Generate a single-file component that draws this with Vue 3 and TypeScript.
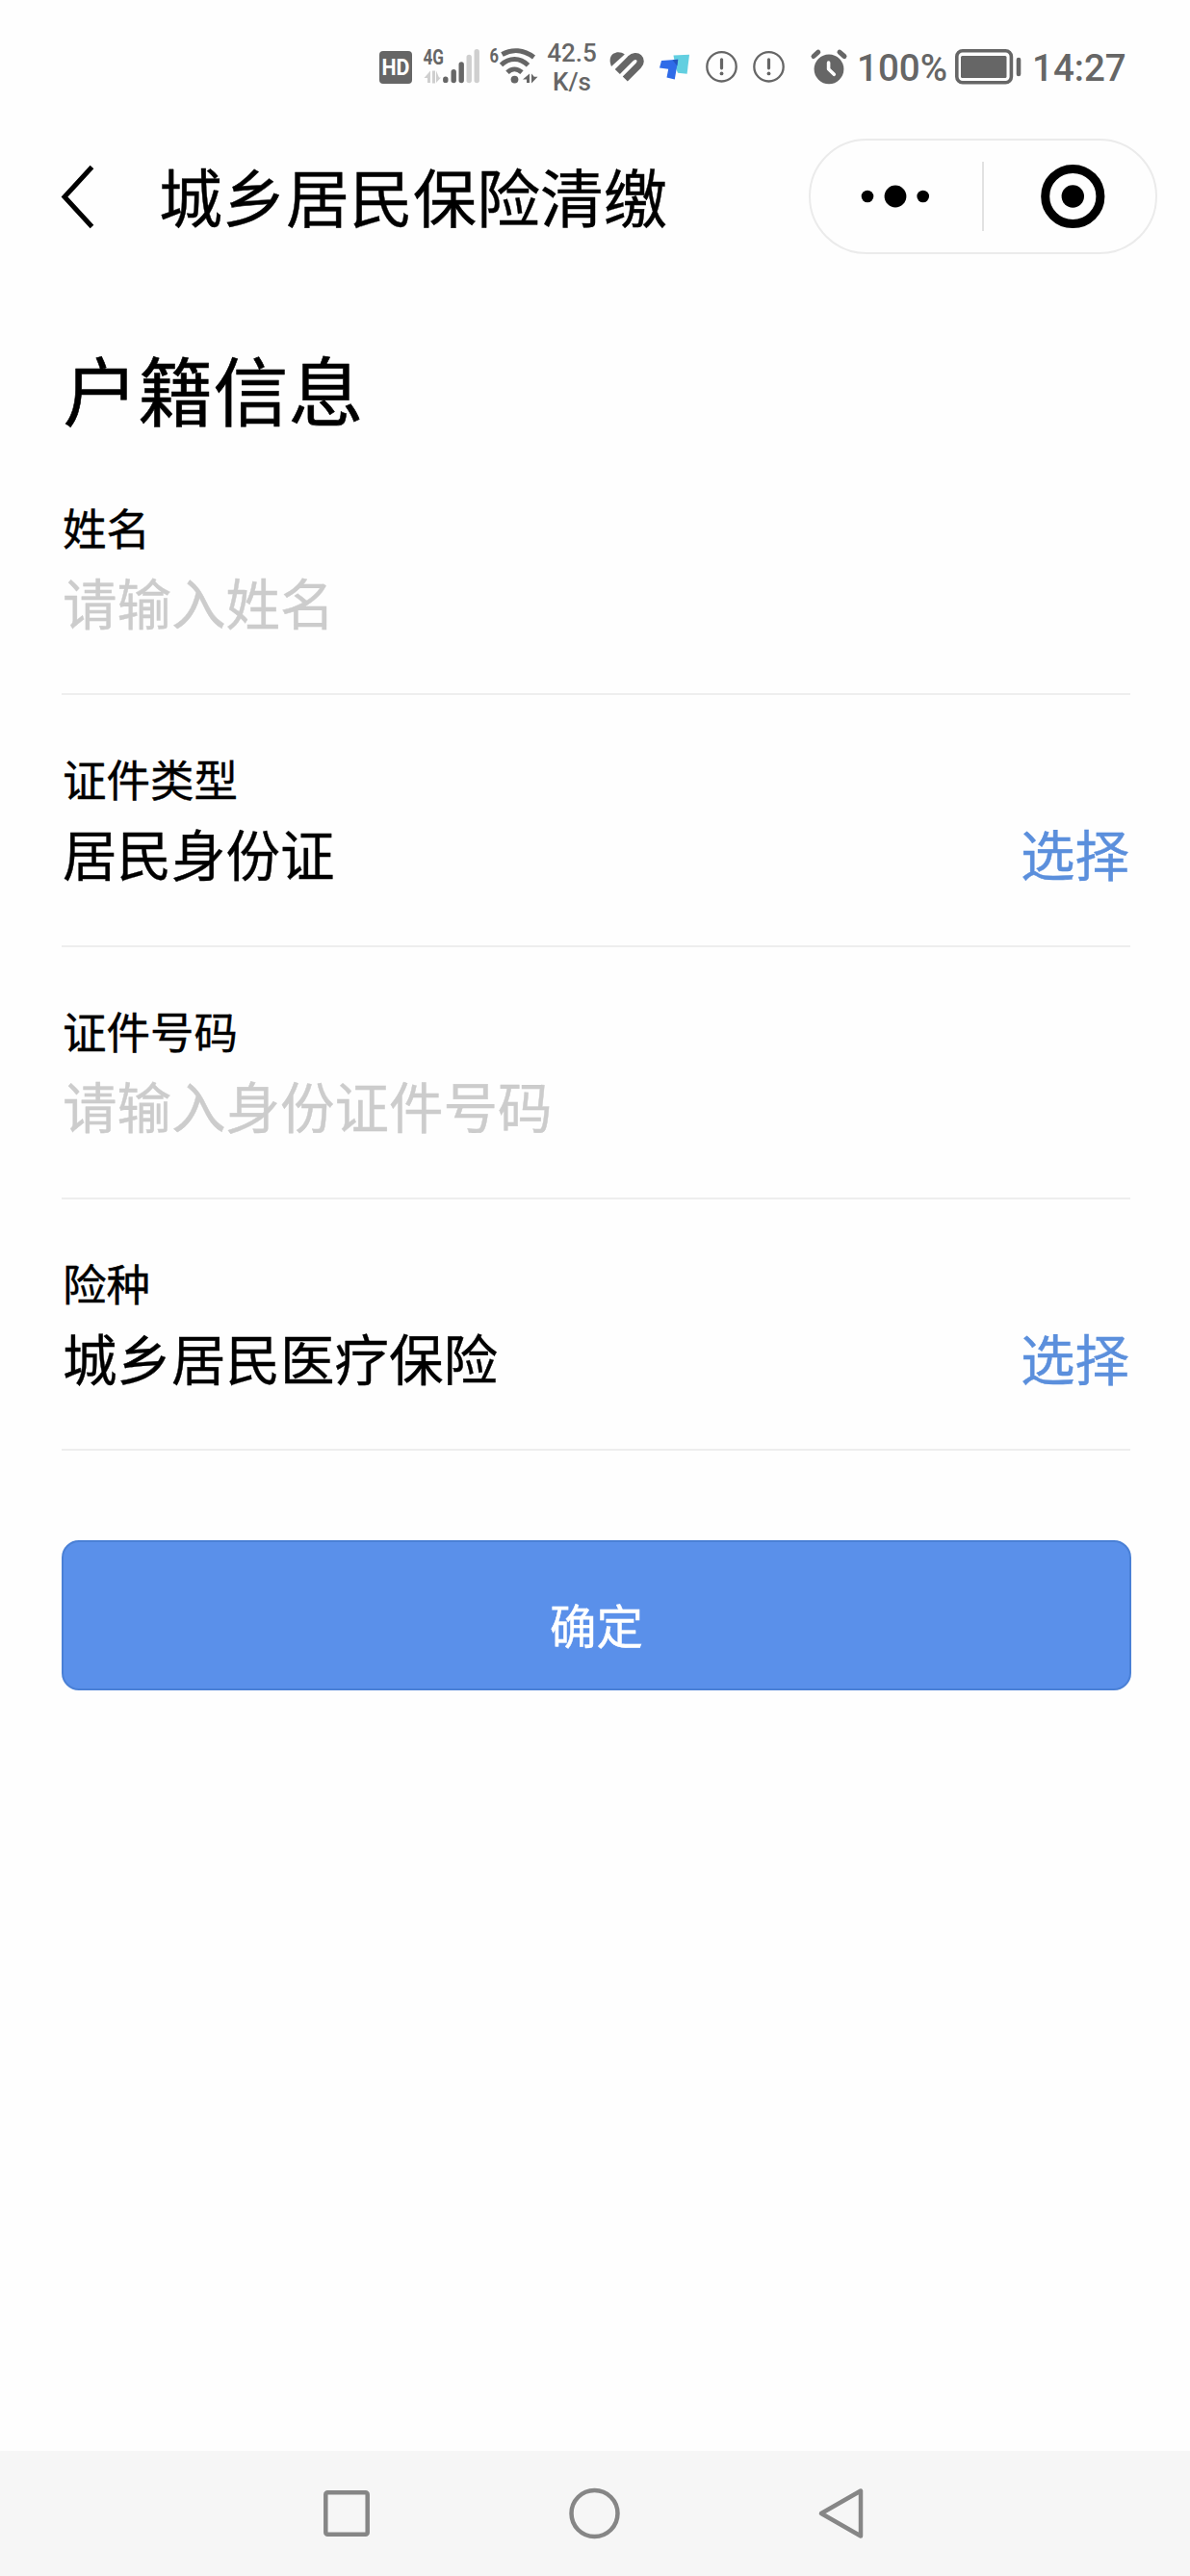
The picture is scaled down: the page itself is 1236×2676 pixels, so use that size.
<script setup lang="ts">
interface Field {
  label: string
  value?: string
  placeholder?: string
}

const fields: Field[] = [
  { label: '姓名', placeholder: '请输入姓名' },
  { label: '证件类型', value: '居民身份证' },
  { label: '证件号码', placeholder: '请输入身份证件号码' },
  { label: '险种', value: '城乡居民医疗保险' },
]
</script>

<template>
  <div class="screen">
    <div class="status">
      <svg class="ic" width="46" height="60" viewBox="390 40 46 60">
        <rect x="394" y="53" width="34" height="34" rx="4" fill="#666" />
        <text x="396.5" y="78" class="b" font-size="23" fill="#fff" textLength="29" lengthAdjust="spacingAndGlyphs">HD</text>
      </svg>
      <svg class="ic" width="68" height="60" viewBox="436 40 68 60">
        <text x="439.5" y="66.5" class="b" font-size="22" fill="#666" textLength="21.5" lengthAdjust="spacingAndGlyphs">4G</text>
        <g stroke-width="5.4" stroke-linecap="round">
          <path stroke="#666" d="M462.8 82.2v1.2M471.2 74.7v8.8M479.2 67v16.5" />
          <path stroke="#cfcfcf" d="M487.2 59.5v24M495.2 53.7v29.8" />
        </g>
        <path fill="#cfcfcf" d="M440.5 81l6.500-7.500v12.500h-3v-5zM449 73.500h3V86.500h-3zM453 73.500v12.500l5-5.500h-2z" />
      </svg>
      <svg class="ic" width="61" height="60" viewBox="504 40 61 60">
        <text x="508.500" y="65" class="b" font-size="21" fill="#666" textLength="9.500" lengthAdjust="spacingAndGlyphs">6</text>
        <g fill="none" stroke="#666" stroke-width="5">
          <path d="M521.500 56.500C532 50.500 544 51.500 554.500 59.500" />
          <path d="M520.500 67.500C529 59.500 540 59.500 548.500 67.800" />
          <path d="M527 75.200C531.500 70.800 537 70.800 542 75.200" />
        </g>
        <circle cx="534.500" cy="82.600" r="3.900" fill="#666" />
        <path fill="#666" d="M543 82.500l7-6V86h-3v-3.500zM552 76.500l2.800 3.200h3.700L552 86.500z" />
      </svg>
      <div class="speed"><span>42.5</span><span>K/s</span></div>
      <svg class="ic" width="52" height="60" viewBox="626 40 52 60">
        <path fill="#666" d="M635 69C632.500 63 633.500 58.500 637 55.800C641 53.200 645.500 54 648.800 56.500Z" />
        <path fill="none" stroke="#666" stroke-width="7.200" d="M641.300 74.500L654.500 61.200C661.500 54.500 669 62 663 68.300L649.300 82" />
      </svg>
      <svg class="ic" width="50" height="60" viewBox="678 40 50 60">
        <path fill="#62cfe0" d="M699.500 57.500L716 56.800L713.600 76.800L704 75.800L702 71Z" />
        <path fill="#2f6be8" d="M687 63L704 61.800L703.400 67L700.800 82.400L692.500 80.600L694.200 71.800L685 70.500Z" />
        <path fill="#2356c0" d="M698.500 62.200L704.300 61.800L703.300 68.500Z" />
      </svg>
      <svg v-for="n in 2" :key="n" class="ic" width="49" height="60" viewBox="725 40 49 60">
        <circle cx="746.500" cy="69.300" r="15.200" fill="none" stroke="#666" stroke-width="2.300" />
        <path d="M746.500 61.800V70.800" stroke="#666" stroke-width="3.200" stroke-linecap="round" />
        <circle cx="746.500" cy="76.400" r="1.900" fill="#666" />
      </svg>
      <svg class="ic" width="64" height="60" viewBox="826 40 64 60">
        <circle cx="861" cy="71.800" r="15.400" fill="#666" />
        <path d="M845 58.500L849.800 54.200M872 54.200L877 58.500" stroke="#666" stroke-width="5" stroke-linecap="round" />
        <path d="M860.600 65V71.800L866.300 77.300" fill="none" stroke="#fefefe" stroke-width="3.600" stroke-linecap="round" stroke-linejoin="round" />
      </svg>
      <span class="big pct">100%</span>
      <svg class="ic" width="86" height="60" viewBox="986 40 86 60">
        <rect x="993.800" y="52.800" width="56.600" height="33" rx="6" fill="none" stroke="#666" stroke-width="3.600" />
        <rect x="998" y="58" width="47.500" height="23" rx="1.500" fill="#666" />
        <path d="M1058 62V77" stroke="#666" stroke-width="4.600" stroke-linecap="round" />
      </svg>
      <span class="big">14:27</span>
    </div>

    <header class="navbar">
      <svg class="back" width="40" height="72" viewBox="0 0 40 72">
        <path d="M34.500 5.500L6 36.500L34.500 67.500" fill="none" stroke="#000" stroke-width="5" />
      </svg>
      <h1>城乡居民保险清缴</h1>
      <div class="capsule">
        <svg width="178" height="72" viewBox="842 168.500 178 72">
          <circle cx="901" cy="204.500" r="6.300" /><circle cx="930" cy="204.500" r="11.400" /><circle cx="958.700" cy="204.500" r="6.300" />
        </svg>
        <i class="split"></i>
        <svg width="178" height="72" viewBox="1022 168.500 178 72">
          <circle cx="1114.300" cy="204.500" r="28.600" fill="none" stroke="#000" stroke-width="9" />
          <circle cx="1114.300" cy="204.500" r="11.700" />
        </svg>
      </div>
    </header>

    <main>
      <h2>户籍信息</h2>
      <section v-for="f in fields" :key="f.label" class="field">
        <label>{{ f.label }}</label>
        <div class="row">
          <span v-if="f.value">{{ f.value }}</span>
          <span v-else class="placeholder">{{ f.placeholder }}</span>
          <a v-if="f.value">选择</a>
        </div>
      </section>
      <button type="button">确定</button>
    </main>

    <footer>
      <svg width="60" height="60" viewBox="0 0 60 60"><rect x="8.300" y="8.300" width="43.400" height="43.400" rx="2" /></svg>
      <svg width="60" height="60" viewBox="0 0 60 60"><circle cx="29.500" cy="30" r="24" /></svg>
      <svg width="60" height="60" viewBox="0 0 60 60"><path d="M48 6.500V53.500L7 30Z" /></svg>
    </footer>
  </div>
</template>

<style>
body {
  margin: 0;
  background: #fefefe;
}
</style>

<style scoped>
.screen {
  width: 1236px;
  height: 2676px;
  display: flex;
  flex-direction: column;
  background: #fefefe;
  color: #000;
  font-family: "Noto Sans CJK SC", sans-serif;
}
svg {
  display: block;
  flex: none;
}
.status {
  height: 112px;
  box-sizing: border-box;
  padding: 40px 0 12px 390px;
  display: flex;
  align-items: flex-start;
  color: #666;
  font-family: Roboto, sans-serif;
}
.b {
  font-family: Roboto, sans-serif;
  font-weight: 700;
}
.speed {
  width: 61px;
  height: 60px;
  display: flex;
  flex-direction: column;
  align-items: flex-start;
  font-size: 26px;
  font-weight: 500;
  line-height: 30px;
}
.speed span {
  width: 58px;
  text-align: center;
}
.big {
  font-size: 38.500px;
  font-weight: 500;
  line-height: 61px;
}
.pct {
  width: 96px;
}
.navbar {
  height: 184px;
  box-sizing: border-box;
  padding: 0 34px 0 61px;
  display: flex;
  align-items: center;
}
h1 {
  margin: 0 auto 0 64px;
  font-size: 66px;
  font-weight: 400;
  line-height: 96px;
  padding-bottom: 4px;
  white-space: nowrap;
  -webkit-text-stroke: 0.400px #000;
}
.capsule {
  width: 362px;
  height: 120px;
  box-sizing: border-box;
  border: 2px solid #ebebeb;
  border-radius: 60px;
  display: flex;
  align-items: center;
}
.split {
  width: 2px;
  height: 72px;
  background: #e2e2e2;
}
main {
  flex: 1;
  padding: 62px 62px 0 64px;
}
h2 {
  margin: 0 0 12.250px;
  padding-left: 1.500px;
  font-size: 78px;
  font-weight: 400;
  line-height: 90px;
  -webkit-text-stroke: 0.600px #000;
}
.field {
  height: 261.750px;
  box-sizing: border-box;
  padding-top: 56.250px;
  border-bottom: 2px solid #eee;
  -webkit-text-stroke: 0.400px currentColor;
}
label {
  display: block;
  padding-left: 1px;
  font-size: 45.500px;
  line-height: 60px;
}
.row {
  margin-top: 12px;
  padding: 0 1px;
  display: flex;
  justify-content: space-between;
  font-size: 56.500px;
  line-height: 70px;
}
.placeholder {
  color: #ccc;
}
.row a {
  color: #5b8fdc;
}
button {
  display: block;
  width: 1111px;
  height: 156px;
  margin: 92.750px 0 0;
  padding: 17px 0 0;
  border: 2px solid #4a80d6;
  border-radius: 18px;
  background: #5a90ea;
  color: #fff;
  font-family: inherit;
  font-size: 48.500px;
  line-height: 70px;
  -webkit-text-stroke: 0.400px #fff;
}
footer {
  height: 130px;
  box-sizing: border-box;
  padding: 0 330px 0 330px;
  display: flex;
  justify-content: space-between;
  align-items: center;
  background: #f6f6f6;
}
footer svg {
  fill: none;
  stroke: #868686;
  stroke-width: 4.500px;
  stroke-linejoin: round;
}
</style>
